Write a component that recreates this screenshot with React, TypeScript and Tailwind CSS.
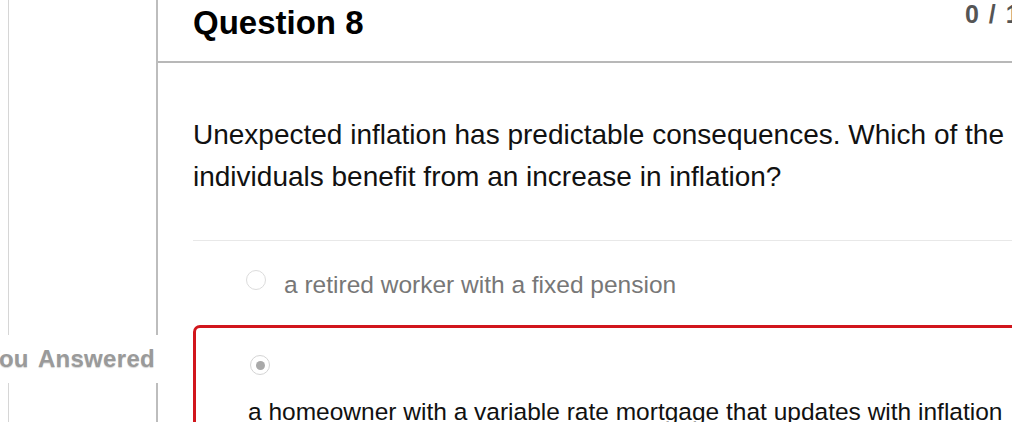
export default function App() {
  return (
    <div className="w-[1012px] h-[422px] overflow-hidden bg-white font-['Liberation_Sans',Arial,sans-serif]">
      <div className="ml-[8px] h-full border-l border-[#d6d6d6] flex">
        <div className="w-[147px] shrink-0" />
        <div className="w-[950px] shrink-0 h-full border-l-2 border-[#bdbdbd]">
          <div className="h-[63px] border-b-2 border-[#b8b8b8] flex">
            <h2 className="w-[807px] shrink-0 pl-[35px] pt-[3px] text-[33px] leading-[40px] font-bold text-black">
              Question 8
            </h2>
            <div className="pt-[2px] text-[25px] leading-[25px] font-bold tracking-[1.5px] text-[#555] whitespace-nowrap">
              0 / 1 pts
            </div>
          </div>

          <div className="pl-[35px]">
            <p className="w-[830px] pt-[51px] text-[28px] leading-[42px] text-[#111]">
              Unexpected inflation has predictable consequences. Which of the individuals benefit from an increase in
              inflation?
            </p>

            <div className="mt-[42px] h-px bg-[#e8e8e8]" />

            <div className="mt-[26px] flex items-start pl-[53px]">
              <span className="mt-[3px] w-[20px] h-[20px] rounded-full border border-[#dcdcdc] bg-white shrink-0" />
              <span className="ml-[18px] text-[24.5px] leading-[36px] text-[#777] whitespace-nowrap">
                a retired worker with a fixed pension
              </span>
            </div>

            <div className="relative mt-[22px]">
              <div className="absolute right-[calc(100%+33px)] top-[10px] h-[48px] flex items-center bg-white pl-[2px] pr-[5px] text-[24px] font-bold tracking-[0.3px] [word-spacing:3px] text-[#9a9a9a] whitespace-nowrap [text-shadow:0_1px_1px_#d4d4d4]">
                You Answered
              </div>
              <div className="border-[3px] border-[#d1161c] rounded-[7px] pt-[27px] pl-[52px] pb-[20px]">
                <span className="ml-[2px] w-[20px] h-[20px] rounded-full border border-[#d4d4d4] bg-white flex items-center justify-center">
                  <span className="w-[9px] h-[9px] rounded-full bg-[#a9a9a9]" />
                </span>
                <div className="mt-[19px] text-[24.5px] leading-[36px] text-[#111] whitespace-nowrap">
                  a homeowner with a variable rate mortgage that updates with inflation
                </div>
              </div>
            </div>
          </div>
        </div>
      </div>
    </div>
  );
}
